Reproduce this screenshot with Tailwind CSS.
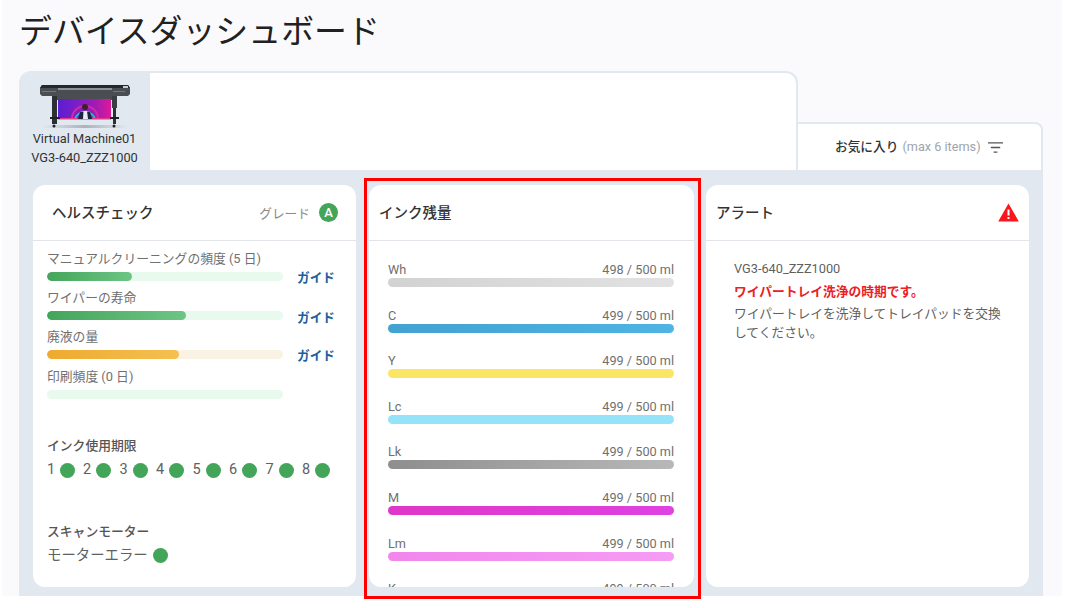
<!DOCTYPE html>
<html lang="ja">
<head>
  <meta charset="UTF-8">
  <title>デバイスダッシュボード</title>
  <script src="https://cdn.jsdelivr.net/npm/@tailwindcss/browser@4"></script>
</head>
<body class="bg-white font-['Roboto','Noto_Sans_CJK_JP',sans-serif] text-[#4a4a4a] overflow-hidden">
  <div class="relative w-[1069px] h-[608px] overflow-hidden">
    <!-- page area -->
    <div class="ml-[2px] w-[1060px] h-[596px] bg-[#fafafc] pl-[17px] overflow-hidden">
      <h1 class="h-[71px] pt-[10px] text-[32.9px] leading-[44px] text-[#212121]">デバイスダッシュボード</h1>

      <div class="w-[1024px]">
        <!-- tabs -->
        <div class="flex h-[99px] items-end">
          <div class="flex h-[99px] w-[779px] rounded-tl-xl rounded-tr-xl border-t-2 border-r-2 border-[#e1e8f0] bg-white overflow-hidden">
            <div class="flex w-[131px] shrink-0 flex-col items-center bg-[#e1e8f0] pt-[12px]">
              <svg width="92" height="44" viewBox="0 0 92 44">
                <defs>
                  <linearGradient id="print" x1="0" x2="1">
                    <stop offset="0" stop-color="#5a1fd0"/>
                    <stop offset="0.35" stop-color="#7a1ec8"/>
                    <stop offset="0.7" stop-color="#a01cb4"/>
                    <stop offset="1" stop-color="#e0189a"/>
                  </linearGradient>
                  <linearGradient id="shadow" x1="0" x2="1">
                    <stop offset="0" stop-color="#e1e8f0"/>
                    <stop offset="0.5" stop-color="#aeb3ba"/>
                    <stop offset="1" stop-color="#e1e8f0"/>
                  </linearGradient>
                </defs>
                <rect x="3" y="40" width="86" height="3" fill="url(#shadow)"/>
                <!-- head -->
                <path d="M1 3 L3 0 H89 L91 3 V9 L89 11 H75 V15 H18 V11 H3 L1 9 Z" fill="#4a4e52"/>
                <path d="M3 0 H89 L91 3 H1 Z" fill="#25272b"/>
                <rect x="19" y="3" width="54" height="2" fill="#8d9094"/>
                <rect x="3" y="6" width="14" height="1" fill="#3f87b8"/>
                <rect x="74" y="6" width="12" height="1" fill="#3f87b8"/>
                <rect x="84" y="1" width="5" height="2" fill="#c9ccd0"/>
                <!-- print -->
                <rect x="19" y="14" width="53" height="20" fill="url(#print)"/>
                <path d="M33 34 A13 13 0 0 1 59 34" fill="none" stroke="#d8269e" stroke-width="2"/>
                <path d="M36 34 A10.500 10.500 0 0 1 56 34" fill="none" stroke="#27b8c8" stroke-width="2"/>
                <rect x="19" y="33" width="53" height="1.500" fill="#e23a8c"/>
                <circle cx="46" cy="22" r="3" fill="#3a2422"/>
                <path d="M39 34 L41 27 H51 L53 34 Z" fill="#1d2440"/>
                <path d="M44 34 L44.500 26 H48 L49 34 Z" fill="#e9e9f0"/>
                <!-- stand -->
                <rect x="13" y="11" width="5" height="28" fill="#2c2f33"/>
                <rect x="73" y="11" width="5" height="12" fill="#3b3f43"/>
                <rect x="74" y="23" width="3" height="16" fill="#2c2f33"/>
                <rect x="11" y="32" width="10" height="2" fill="#1e2023"/>
                <rect x="71" y="32" width="9" height="2" fill="#1e2023"/>
                <circle cx="15" cy="41" r="1.500" fill="#1e2023"/>
                <circle cx="75" cy="41" r="1.500" fill="#1e2023"/>
              </svg>
              <div class="mt-[1px] text-center text-[12.8px] leading-[18.5px] text-[#333] whitespace-nowrap">Virtual Machine01<br>VG3-640_ZZZ1000</div>
            </div>
          </div>
          <div class="flex h-[48px] w-[245px] items-center rounded-tr-lg border-t-2 border-r-2 border-[#e1e8f0] bg-white pl-[37px]">
            <span class="text-[12.7px] font-medium text-[#333]">お気に入り</span>
            <span class="ml-[4px] text-[12.7px] text-[#a0a4ab]">(max 6 items)</span>
            <svg class="ml-[7px]" width="15" height="13" viewBox="0 0 16 13" fill="none" stroke="#555" stroke-width="1.4">
              <path d="M0 1.500H16M3 6.500H13M6 11.500H10"/>
            </svg>
          </div>
        </div>

        <!-- cards -->
        <div class="flex h-[426px] bg-[#e1e8f0] pl-[14px] pt-[15px]">
          <!-- health -->
          <section class="h-[402px] w-[323px] rounded-xl bg-white overflow-hidden">
            <div class="flex h-[56px] items-center border-b border-[#e1e4e8] pl-[19px] pr-[18px]">
              <h2 class="mt-[3px] text-[14.5px] font-medium text-[#333]">ヘルスチェック</h2>
              <span class="ml-auto mt-[3px] text-[12.7px] text-[#8a8a8a]">グレード</span>
              <span class="ml-[9px] flex h-[19px] w-[19px] items-center justify-center rounded-full bg-[#43a55a] text-[13px] font-medium text-white">A</span>
            </div>
            <div class="pl-[14px] pt-[9px]">
              <div class="h-[39.2px]">
                <div class="text-[12.8px] leading-[17px] text-[#707070]">マニュアルクリーニングの頻度 (5 日)</div>
                <div class="mt-[5px] flex h-[9px] items-center">
                  <div class="h-[9px] w-[236px] rounded-full bg-[#e8f9ee] overflow-hidden"><div class="h-full w-[85px] rounded-full bg-gradient-to-r from-[#43a55a] to-[#6dc585]"></div></div>
                  <a class="ml-[14px] mt-[3px] text-[12.7px] font-bold text-[#1b5f9e]">ガイド</a>
                </div>
              </div>
              <div class="h-[39.2px]">
                <div class="text-[12.8px] leading-[17px] text-[#707070]">ワイパーの寿命</div>
                <div class="mt-[5px] flex h-[9px] items-center">
                  <div class="h-[9px] w-[236px] rounded-full bg-[#e8f9ee] overflow-hidden"><div class="h-full w-[139px] rounded-full bg-gradient-to-r from-[#43a55a] to-[#6dc585]"></div></div>
                  <a class="ml-[14px] mt-[3px] text-[12.7px] font-bold text-[#1b5f9e]">ガイド</a>
                </div>
              </div>
              <div class="h-[39.2px]">
                <div class="text-[12.8px] leading-[17px] text-[#707070]">廃液の量</div>
                <div class="mt-[5px] flex h-[9px] items-center">
                  <div class="h-[9px] w-[236px] rounded-full bg-[#faf2e2] overflow-hidden"><div class="h-full w-[132px] rounded-full bg-gradient-to-r from-[#eeaa2e] to-[#f4c050]"></div></div>
                  <a class="ml-[14px] mt-[2px] text-[12.7px] font-bold text-[#1b5f9e]">ガイド</a>
                </div>
              </div>
              <div>
                <div class="text-[12.8px] leading-[17px] text-[#707070]">印刷頻度 (0 日)</div>
                <div class="mt-[5px] h-[9px] w-[236px] rounded-full bg-[#e8f9ee]"></div>
              </div>

              <h3 class="mt-[38px] text-[12.8px] leading-[17px] font-medium text-[#555]">インク使用期限</h3>
              <div class="mt-[8px] flex h-[17px] items-center text-[14.5px] text-[#606060]">
                <span class="w-[12.5px]">1</span><span class="h-[15px] w-[15px] rounded-full bg-[#43a55a]"></span>
                <span class="ml-[8.5px] w-[13px]">2</span><span class="h-[15px] w-[15px] rounded-full bg-[#43a55a]"></span>
                <span class="ml-[8.5px] w-[13px]">3</span><span class="h-[15px] w-[15px] rounded-full bg-[#43a55a]"></span>
                <span class="ml-[8.5px] w-[13px]">4</span><span class="h-[15px] w-[15px] rounded-full bg-[#43a55a]"></span>
                <span class="ml-[8.5px] w-[13px]">5</span><span class="h-[15px] w-[15px] rounded-full bg-[#43a55a]"></span>
                <span class="ml-[8.5px] w-[13px]">6</span><span class="h-[15px] w-[15px] rounded-full bg-[#43a55a]"></span>
                <span class="ml-[8.5px] w-[13px]">7</span><span class="h-[15px] w-[15px] rounded-full bg-[#43a55a]"></span>
                <span class="ml-[8.5px] w-[13px]">8</span><span class="h-[15px] w-[15px] rounded-full bg-[#43a55a]"></span>
              </div>

              <h3 class="mt-[44px] text-[12.8px] leading-[17px] font-medium text-[#555]">スキャンモーター</h3>
              <div class="mt-[7px] flex h-[17px] items-center text-[14.4px] text-[#606060]">
                <span class="mt-[1px]">モーターエラー</span><span class="ml-[5.5px] h-[15px] w-[15px] rounded-full bg-[#43a55a]"></span>
              </div>
            </div>
          </section>

          <!-- ink -->
          <section class="ml-[13px] h-[402px] w-[325px] rounded-xl bg-white overflow-hidden">
            <div class="flex h-[56px] items-center border-b border-[#e1e4e8] pl-[10px]">
              <h2 class="mt-[3px] text-[14.5px] font-medium text-[#333]">インク残量</h2>
            </div>
            <div class="flex flex-col gap-[19.6px] pl-[19px] pr-[20px] pt-[20px]">
              <div>
                <div class="flex justify-between text-[12.7px] leading-[17px] text-[#707070]"><span>Wh</span><span>498 / 500 ml</span></div>
                <div class="h-[9px] rounded-full bg-gradient-to-r from-[#d2d2d2] to-[#e2e2e2]"></div>
              </div>
              <div>
                <div class="flex justify-between text-[12.7px] leading-[17px] text-[#707070]"><span>C</span><span>499 / 500 ml</span></div>
                <div class="h-[9px] rounded-full bg-gradient-to-r from-[#42a2d0] to-[#4eb4e4]"></div>
              </div>
              <div>
                <div class="flex justify-between text-[12.7px] leading-[17px] text-[#707070]"><span>Y</span><span>499 / 500 ml</span></div>
                <div class="h-[9px] rounded-full bg-[#fbe565]"></div>
              </div>
              <div>
                <div class="flex justify-between text-[12.7px] leading-[17px] text-[#707070]"><span>Lc</span><span>499 / 500 ml</span></div>
                <div class="h-[9px] rounded-full bg-[#94e3f8]"></div>
              </div>
              <div>
                <div class="flex justify-between text-[12.7px] leading-[17px] text-[#707070]"><span>Lk</span><span>499 / 500 ml</span></div>
                <div class="h-[9px] rounded-full bg-gradient-to-r from-[#8e8e8e] to-[#b8b8b8]"></div>
              </div>
              <div>
                <div class="flex justify-between text-[12.7px] leading-[17px] text-[#707070]"><span>M</span><span>499 / 500 ml</span></div>
                <div class="h-[9px] rounded-full bg-gradient-to-r from-[#de37c8] to-[#de42e2]"></div>
              </div>
              <div>
                <div class="flex justify-between text-[12.7px] leading-[17px] text-[#707070]"><span>Lm</span><span>499 / 500 ml</span></div>
                <div class="h-[9px] rounded-full bg-gradient-to-r from-[#f186ec] to-[#f59cf4]"></div>
              </div>
              <div>
                <div class="flex justify-between text-[12.7px] leading-[17px] text-[#707070]"><span>K</span><span>499 / 500 ml</span></div>
                <div class="h-[9px] rounded-full bg-[#333]"></div>
              </div>
            </div>
          </section>

          <!-- alert -->
          <section class="ml-[12px] h-[402px] w-[323px] rounded-xl bg-white overflow-hidden">
            <div class="flex h-[56px] items-center justify-between border-b border-[#e1e4e8] pl-[10px] pr-[10px]">
              <h2 class="mt-[3px] text-[14.5px] font-medium text-[#333]">アラート</h2>
              <svg width="21" height="19" viewBox="0 0 21 19">
                <path d="M10.500 0.500L20.800 18.500H0.200Z" fill="#f8171c"/>
                <rect x="9.500" y="6.500" width="2" height="6" fill="#fff"/>
                <rect x="9.500" y="14" width="2" height="2" fill="#fff"/>
              </svg>
            </div>
            <div class="pl-[28px] pr-[24px] pt-[19px] text-[12.75px] leading-[17px] text-[#606060]">
              <div class="text-[#5f5f5f]">VG3-640_ZZZ1000</div>
              <div class="mt-[6px] font-bold text-[#ec2024]">ワイパートレイ洗浄の時期です。</div>
              <p class="mt-[5px] leading-[18.5px]">ワイパートレイを洗浄してトレイパッドを交換してください。</p>
            </div>
          </section>
        </div>
      </div>
    </div>

    <!-- highlight over ink card -->
    <div class="absolute left-[364px] top-[178px] h-[421px] w-[337px] border-[3px] border-[#ff0000]"></div>
  </div>
</body>
</html>
